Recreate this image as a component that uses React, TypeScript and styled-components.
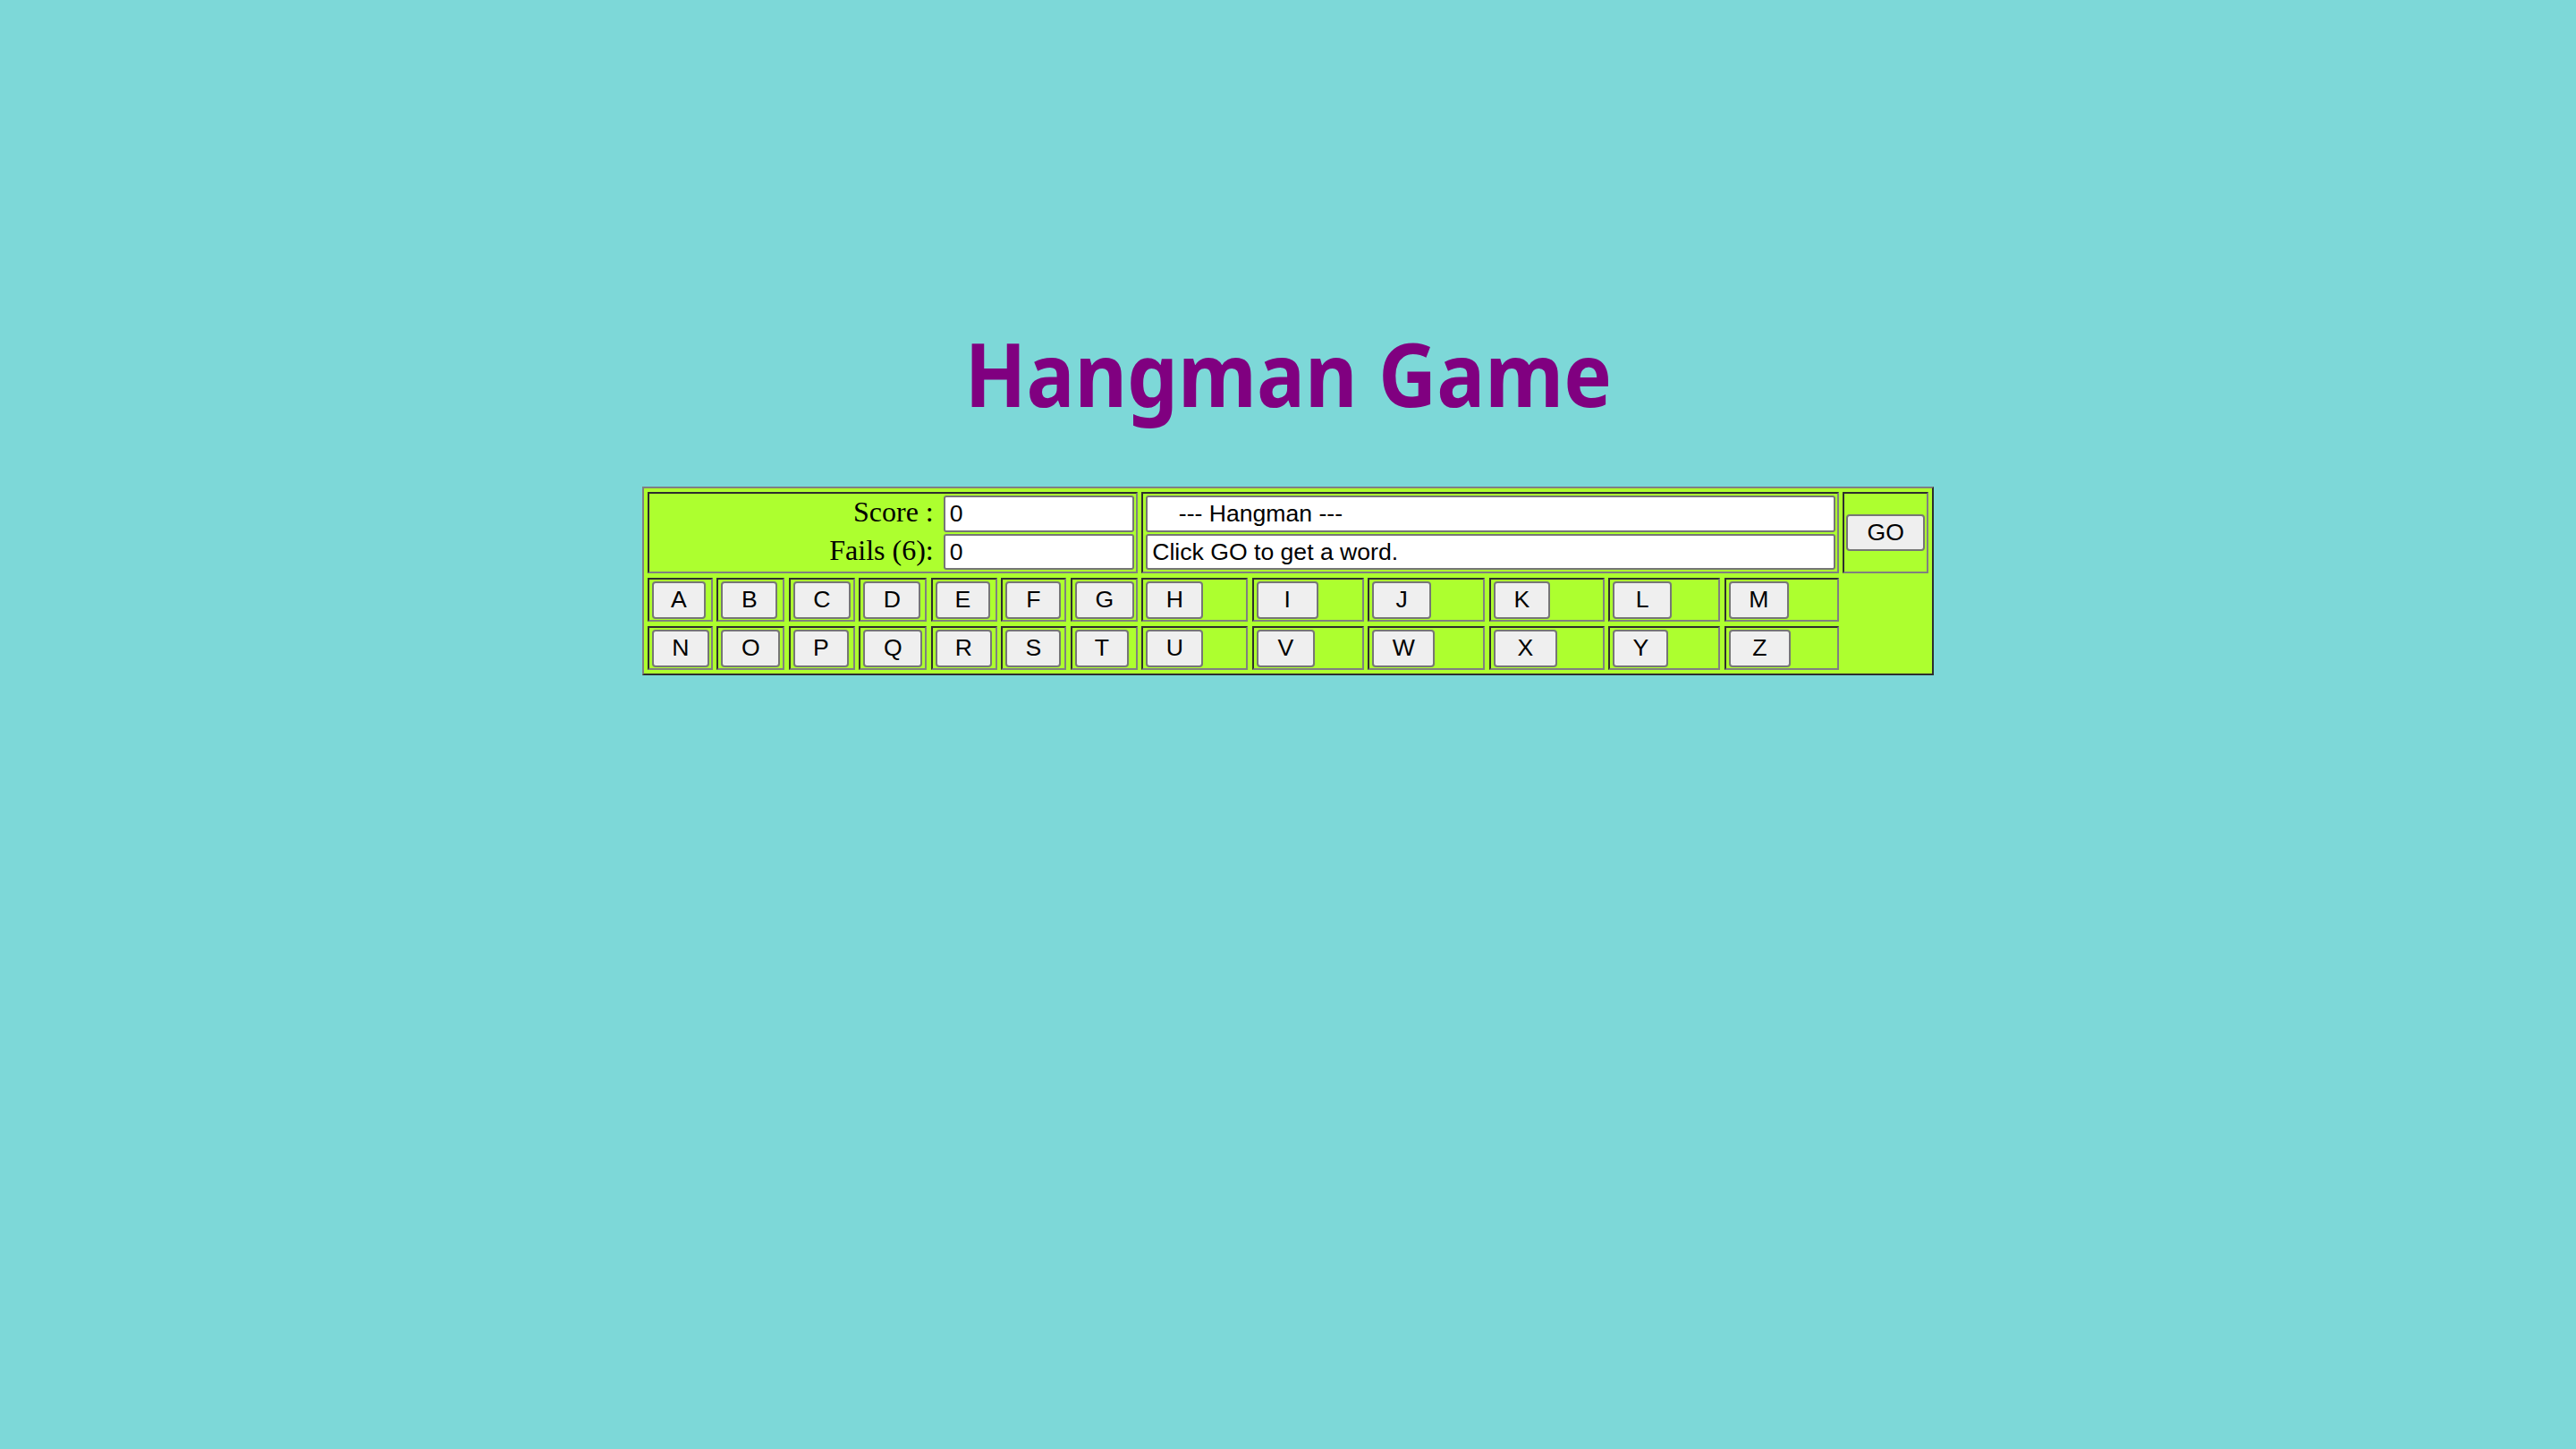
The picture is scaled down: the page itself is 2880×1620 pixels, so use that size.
import React, { useState } from 'react';
import styled, { createGlobalStyle } from 'styled-components';

const GlobalStyle = createGlobalStyle`
  html, body {
    margin: 0;
    padding: 0;
    background-color: #7dd8d8;
  }
  body {
    font-family: "Liberation Serif", "Times New Roman", serif;
  }
`;

const Page = styled.div`
  width: 100%;
  min-height: 100vh;
  display: flex;
  flex-direction: column;
  align-items: center;
  padding-top: 368px;
  box-sizing: border-box;
`;

// the original face is a narrow humanist sans; Noto Sans squeezed a little stands in for it
const Title = styled.h1`
  margin: 0 0 78px;
  font-family: "Noto Sans", "Open Sans", sans-serif;
  font-weight: 700;
  font-size: 98px;
  line-height: 1;
  color: #800080;
  white-space: nowrap;
  transform: scaleX(0.92);
`;

const Board = styled.div`
  display: grid;
  grid-template-columns: 73px 76px 74px 76px 74px 73px 75px 119px 125px 131px 129px 125px 128px 96px;
  grid-template-rows: 91px 49px 49px;
  column-gap: 4.5px;
  row-gap: 5px;
  padding: 4px;
  background-color: #adff2f;
  border: 2px solid;
  border-color: #808080 #2e2e2e #2e2e2e #808080;
`;

const Cell = styled.div<{ $span?: number }>`
  grid-column: span ${(p) => p.$span ?? 1};
  display: flex;
  align-items: center;
  padding: 0 2px 0 3px;
  border: 2px solid;
  border-color: #2e2e2e #808080 #808080 #2e2e2e;
  box-sizing: border-box;
  min-width: 0;
`;

const StackCell = styled(Cell)`
  flex-direction: column;
  align-items: stretch;
  justify-content: center;
  gap: 2px;
`;

const FieldRow = styled.div`
  display: flex;
  justify-content: flex-end;
  align-items: baseline;
  gap: 11px;
`;

const Label = styled.span`
  font-family: "Liberation Serif", "Times New Roman", serif;
  font-size: 32px;
  color: #000;
  white-space: pre;
`;

const TextBox = styled.input<{ $w?: string }>`
  width: ${(p) => p.$w ?? '100%'};
  height: 41px;
  box-sizing: border-box;
  padding: 0 4px 0 5px;
  margin: 0;
  border: 2px solid #767676;
  border-radius: 3px;
  background: #fff;
  font-family: "Liberation Sans", Arial, sans-serif;
  font-size: 26.6px;
  color: #000;
  white-space: pre;
  outline: none;
`;

const Key = styled.button<{ $w: number }>`
  width: ${(p) => p.$w}px;
  height: 42px;
  box-sizing: border-box;
  padding: 0;
  margin: 0;
  background: #efefef;
  border: 2px solid #767676;
  border-radius: 4px;
  font-family: "Liberation Sans", Arial, sans-serif;
  font-size: 26.6px;
  color: #000;
  cursor: pointer;
`;

const GoCell = styled(Cell)`
  padding: 0 2px;
  justify-content: center;
`;

const rowOne: [string, number][] = [
  ['A', 60], ['B', 63], ['C', 64], ['D', 64], ['E', 61], ['F', 62], ['G', 66],
  ['H', 64], ['I', 69], ['J', 66], ['K', 63], ['L', 66], ['M', 67],
];

const rowTwo: [string, number][] = [
  ['N', 64], ['O', 66], ['P', 62], ['Q', 66], ['R', 63], ['S', 62], ['T', 60],
  ['U', 64], ['V', 65], ['W', 70], ['X', 71], ['Y', 62], ['Z', 69],
];

const App: React.FC = () => {
  const [score] = useState('0');
  const [fails] = useState('0');

  return (
    <>
      <GlobalStyle />
      <Page>
        <Title>Hangman Game</Title>
        <Board>
          <StackCell $span={7}>
            <FieldRow>
              <Label>Score :</Label>
              <TextBox $w="213px" value={score} readOnly />
            </FieldRow>
            <FieldRow>
              <Label>Fails (6):</Label>
              <TextBox $w="213px" value={fails} readOnly style={{ height: 40 }} />
            </FieldRow>
          </StackCell>
          <StackCell $span={6}>
            <TextBox value="    --- Hangman ---" readOnly />
            <TextBox value="Click GO to get a word." readOnly style={{ height: 40 }} />
          </StackCell>
          <GoCell>
            <Key $w={88} style={{ height: 41 }}>GO</Key>
          </GoCell>
          {rowOne.map(([l, w]) => (
            <Cell key={l}>
              <Key $w={w}>{l}</Key>
            </Cell>
          ))}
          <div />
          {rowTwo.map(([l, w]) => (
            <Cell key={l}>
              <Key $w={w}>{l}</Key>
            </Cell>
          ))}
        </Board>
      </Page>
    </>
  );
};

export default App;
